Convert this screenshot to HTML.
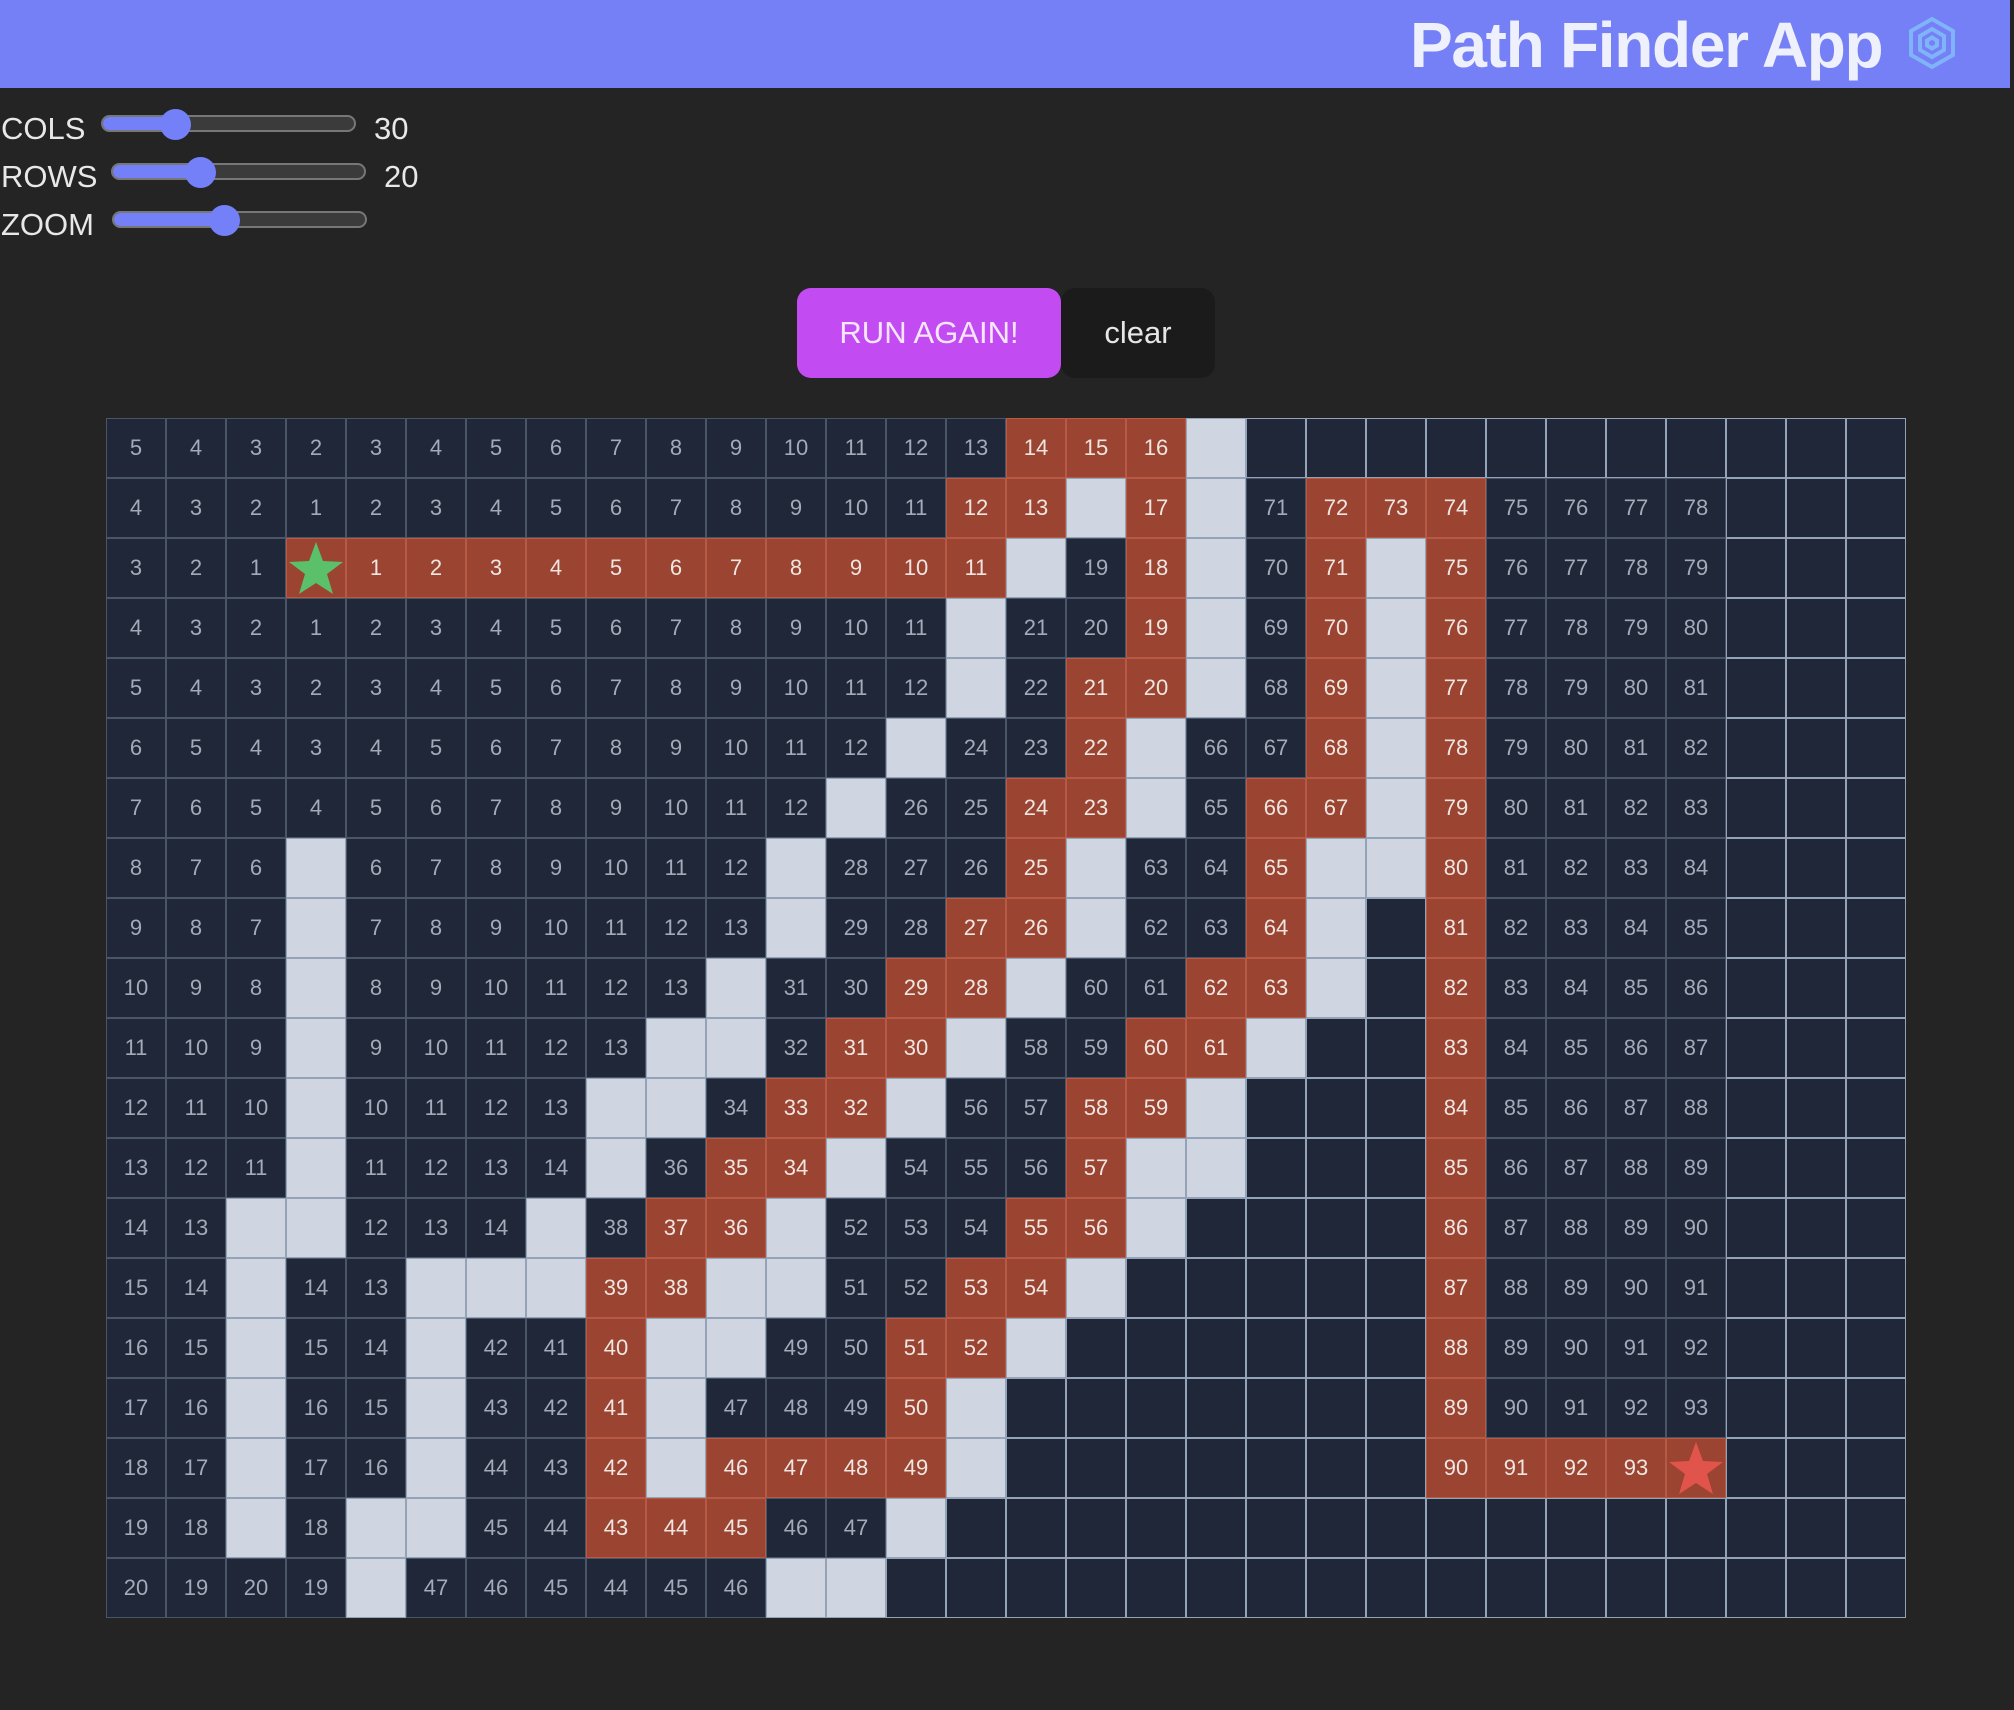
<!DOCTYPE html>
<html><head><meta charset="utf-8">
<style>
html,body{margin:0;padding:0;}
body{width:2014px;height:1710px;background:#242424;position:relative;overflow:hidden;font-family:"Liberation Sans",sans-serif;}
.hdr{position:absolute;left:0;top:0;width:2010px;height:88px;background:#757ff6;}
.title{position:absolute;left:1410px;top:7px;font-size:64px;font-weight:bold;color:#eef0fc;letter-spacing:-1.3px;line-height:76px;white-space:nowrap;}
.logo{position:absolute;left:1906px;top:16px;}
.lbl{position:absolute;left:1px;font-size:31px;color:#e8e8e8;line-height:36px;}
.val{position:absolute;font-size:31px;color:#e8e8e8;line-height:36px;}
.track{position:absolute;height:13px;border:2px solid #777;border-radius:9px;background:#3b3b3b;overflow:hidden;}
.fill{position:absolute;left:0;top:0;bottom:0;background:#7380f7;}
.thumb{position:absolute;width:31px;height:31px;border-radius:50%;background:#7380f7;}
.btn{position:absolute;top:288px;height:90px;border-radius:14px;font-size:31px;line-height:90px;text-align:center;}
.grid{position:absolute;left:106px;top:418px;width:1800px;height:1200px;display:grid;grid-template-columns:repeat(30,60px);grid-template-rows:repeat(20,60px);}
.c{box-sizing:border-box;width:60px;height:60px;border:1px solid #4a5568;background:#1f2738;color:#a3abb9;font-size:22px;display:flex;align-items:center;justify-content:center;}
.e{border-color:#94a3b8;}
.w{background:#cfd6e1;border-color:#94a3b8;}
.p{background:#9b4431;border-color:#b65a45;color:#efe6e2;}
</style></head><body>
<div class="hdr">
<div class="title">Path Finder App</div>
<svg class="logo" width="52" height="54" viewBox="0 0 52 54">
<g fill="none" stroke="#80b4f8" stroke-width="4">
<polygon points="26,3 47,15 47,39 26,51 5,39 5,15"/>
<polygon points="26,13 38,20 38,34 26,41 14,34 14,20"/>
<polygon points="26,21.5 31,24.5 31,29.5 26,32.5 21,29.5 21,24.5"/>
</g></svg>
</div>

<div class="lbl" style="top:111px">COLS</div>
<div class="track" style="left:101px;top:115px;width:251px"><div class="fill" style="width:74px"></div></div>
<div class="thumb" style="left:160px;top:109px"></div>
<div class="val" style="left:374px;top:111px">30</div>

<div class="lbl" style="top:159px">ROWS</div>
<div class="track" style="left:111px;top:163px;width:251px"><div class="fill" style="width:89px"></div></div>
<div class="thumb" style="left:185px;top:157px"></div>
<div class="val" style="left:384px;top:159px">20</div>

<div class="lbl" style="top:207px">ZOOM</div>
<div class="track" style="left:112px;top:211px;width:251px"><div class="fill" style="width:112px"></div></div>
<div class="thumb" style="left:209px;top:205px"></div>

<div class="btn" style="left:797px;width:264px;background:#c24cf1;color:#f6e6fd;">RUN AGAIN!</div>
<div class="btn" style="left:1061px;width:154px;background:#1b1b1b;color:#e6e6e6;">clear</div>

<div class="grid" id="g"></div>
<script>
var rows=[
"5 4 3 2 3 4 5 6 7 8 9 10 11 12 13 p14 p15 p16 W . . . . . . . . . . .",
"4 3 2 1 2 3 4 5 6 7 8 9 10 11 p12 p13 W p17 W 71 p72 p73 p74 75 76 77 78 . . .",
"3 2 1 S p1 p2 p3 p4 p5 p6 p7 p8 p9 p10 p11 W 19 p18 W 70 p71 W p75 76 77 78 79 . . .",
"4 3 2 1 2 3 4 5 6 7 8 9 10 11 W 21 20 p19 W 69 p70 W p76 77 78 79 80 . . .",
"5 4 3 2 3 4 5 6 7 8 9 10 11 12 W 22 p21 p20 W 68 p69 W p77 78 79 80 81 . . .",
"6 5 4 3 4 5 6 7 8 9 10 11 12 W 24 23 p22 W 66 67 p68 W p78 79 80 81 82 . . .",
"7 6 5 4 5 6 7 8 9 10 11 12 W 26 25 p24 p23 W 65 p66 p67 W p79 80 81 82 83 . . .",
"8 7 6 W 6 7 8 9 10 11 12 W 28 27 26 p25 W 63 64 p65 W W p80 81 82 83 84 . . .",
"9 8 7 W 7 8 9 10 11 12 13 W 29 28 p27 p26 W 62 63 p64 W . p81 82 83 84 85 . . .",
"10 9 8 W 8 9 10 11 12 13 W 31 30 p29 p28 W 60 61 p62 p63 W . p82 83 84 85 86 . . .",
"11 10 9 W 9 10 11 12 13 W W 32 p31 p30 W 58 59 p60 p61 W . . p83 84 85 86 87 . . .",
"12 11 10 W 10 11 12 13 W W 34 p33 p32 W 56 57 p58 p59 W . . . p84 85 86 87 88 . . .",
"13 12 11 W 11 12 13 14 W 36 p35 p34 W 54 55 56 p57 W W . . . p85 86 87 88 89 . . .",
"14 13 W W 12 13 14 W 38 p37 p36 W 52 53 54 p55 p56 W . . . . p86 87 88 89 90 . . .",
"15 14 W 14 13 W W W p39 p38 W W 51 52 p53 p54 W . . . . . p87 88 89 90 91 . . .",
"16 15 W 15 14 W 42 41 p40 W W 49 50 p51 p52 W . . . . . . p88 89 90 91 92 . . .",
"17 16 W 16 15 W 43 42 p41 W 47 48 49 p50 W . . . . . . . p89 90 91 92 93 . . .",
"18 17 W 17 16 W 44 43 p42 W p46 p47 p48 p49 W . . . . . . . p90 p91 p92 p93 E . . .",
"19 18 W 18 W W 45 44 p43 p44 p45 46 47 W . . . . . . . . . . . . . . . .",
"20 19 20 19 W 47 46 45 44 45 46 W W . . . . . . . . . . . . . . . . ."
];
var star=function(c){return '<svg width="58" height="56" viewBox="0 0 58 56"><polygon fill="'+c+'" points="29,2 36,21 56,22 40,34 46,54 29,43 12,54 18,34 2,22 22,21"/></svg>';};
var h='';
rows.forEach(function(r){r.split(' ').forEach(function(t){
 if(t=='.')h+='<div class="c e"></div>';
 else if(t=='W')h+='<div class="c w"></div>';
 else if(t=='S')h+='<div class="c p">'+star('#5bc06a')+'</div>';
 else if(t=='E')h+='<div class="c p">'+star('#e0544c')+'</div>';
 else if(t[0]=='p')h+='<div class="c p">'+t.slice(1)+'</div>';
 else h+='<div class="c">'+t+'</div>';
});});
document.getElementById('g').innerHTML=h;
</script>
</body></html>
